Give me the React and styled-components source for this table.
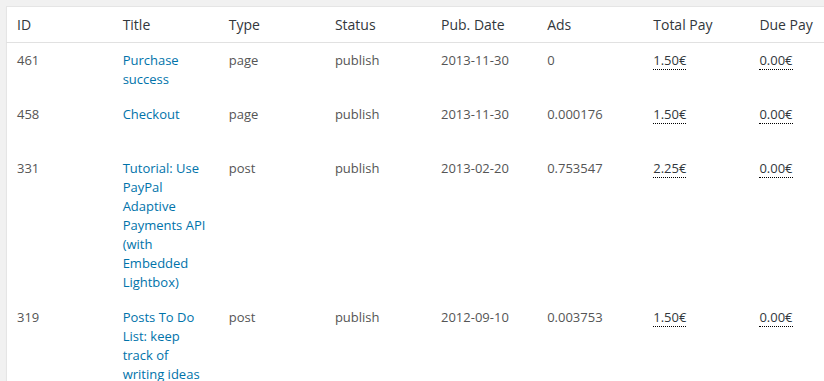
import React from "react";
import styled, { createGlobalStyle } from "styled-components";

const Global = createGlobalStyle`
  html, body {
    margin: 0;
    padding: 0;
    background: #f1f1f1;
    overflow: hidden;
    font-family: "Open Sans", "Noto Sans", sans-serif;
  }
`;

const Page = styled.div`
  padding: 6px 0 0 6px;
  width: 900px;
`;

const Table = styled.table`
  border-collapse: collapse;
  border-spacing: 0;
  table-layout: fixed;
  width: 850px;
  background: #fff;
  border: 1px solid #e5e5e5;
  box-shadow: 0 1px 1px rgba(0, 0, 0, 0.04);
`;

const HeadCell = styled.th`
  width: 106px;
  box-sizing: border-box;
  padding: 8px 10px;
  text-align: left;
  font-weight: 400;
  font-size: 14px;
  line-height: 19px;
  color: #32373c;
  border-bottom: 1px solid #e1e1e1;
`;

const Row = styled.tr`
  height: 54px;
`;

const Cell = styled.td`
  padding: 8px 10px;
  vertical-align: top;
  font-size: 13px;
  line-height: 19px;
  color: #555;
  word-wrap: break-word;
`;

const TitleLink = styled.a`
  color: #0073aa;
  text-decoration: none;
`;

const Amount = styled.span`
  color: #32373c;
  border-bottom: 1px dotted #000;
`;

const columns = ["ID", "Title", "Type", "Status", "Pub. Date", "Ads", "Total Pay", "Due Pay"];

const rows = [
  { id: 461, title: "Purchase success", type: "page", status: "publish", date: "2013-11-30", ads: "0", total: "1.50€", due: "0.00€" },
  { id: 458, title: "Checkout", type: "page", status: "publish", date: "2013-11-30", ads: "0.000176", total: "1.50€", due: "0.00€" },
  { id: 331, title: "Tutorial: Use PayPal Adaptive Payments API (with Embedded Lightbox)", type: "post", status: "publish", date: "2013-02-20", ads: "0.753547", total: "2.25€", due: "0.00€" },
  { id: 319, title: "Posts To Do List: keep track of writing ideas", type: "post", status: "publish", date: "2012-09-10", ads: "0.003753", total: "1.50€", due: "0.00€" },
];

export default function App() {
  return (
    <>
      <Global />
      <Page>
        <Table>
          <thead>
            <tr>
              {columns.map((c) => (
                <HeadCell key={c}>{c}</HeadCell>
              ))}
            </tr>
          </thead>
          <tbody>
            {rows.map((r) => (
              <Row key={r.id}>
                <Cell>{r.id}</Cell>
                <Cell>
                  <TitleLink href="#">{r.title}</TitleLink>
                </Cell>
                <Cell>{r.type}</Cell>
                <Cell>{r.status}</Cell>
                <Cell>{r.date}</Cell>
                <Cell>{r.ads}</Cell>
                <Cell>
                  <Amount>{r.total}</Amount>
                </Cell>
                <Cell>
                  <Amount>{r.due}</Amount>
                </Cell>
              </Row>
            ))}
          </tbody>
        </Table>
      </Page>
    </>
  );
}
